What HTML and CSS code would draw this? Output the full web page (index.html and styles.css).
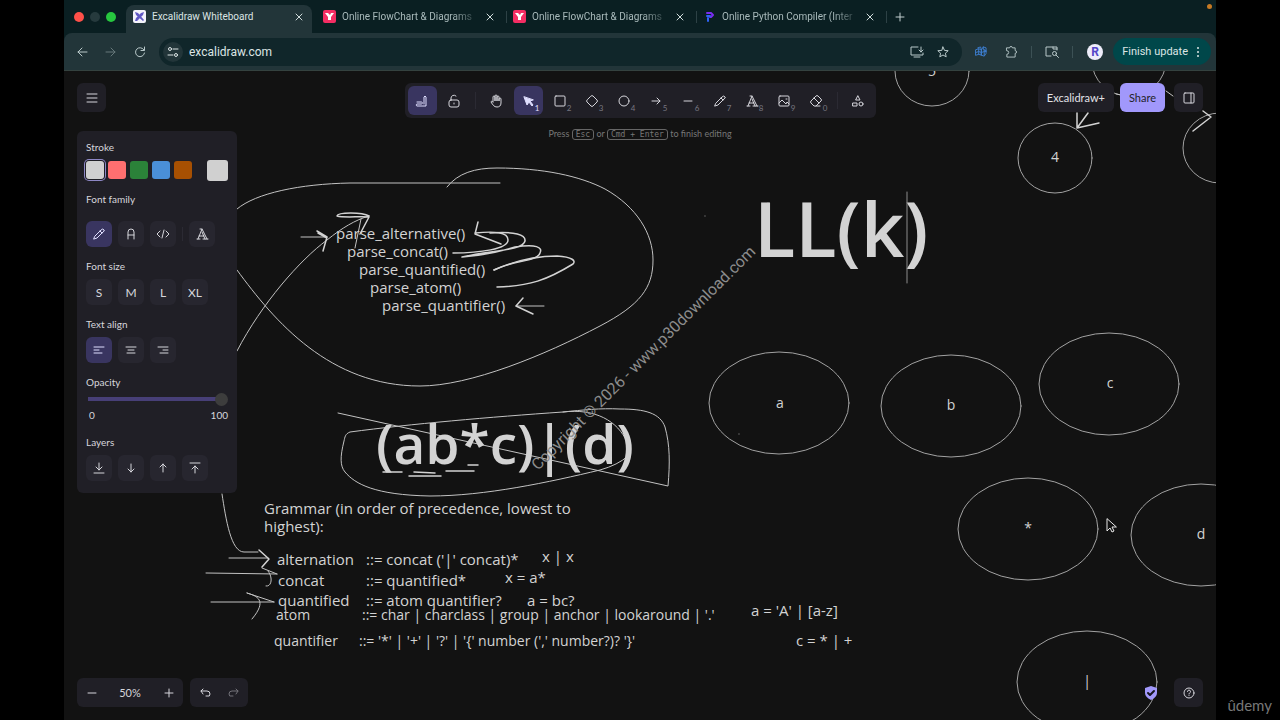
FILE: index.html
```html
<!DOCTYPE html>
<html lang="en">
<head>
    <meta charset="UTF-8">
    <meta name="viewport" content="width=device-width, initial-scale=1.0">
    <title>Excalidraw Whiteboard</title>
    <link rel="stylesheet" href="styles.css">
</head>
<body>
    <div class="browser">
        <!-- Tab strip -->
        <div class="tabs">
            <div class="lights"><i class="light red"></i><i class="light gray"></i><i class="light green"></i></div>
            <div class="tab tab-active">
                <svg class="favicon" viewBox="0 0 13 13"><rect width="13" height="13" rx="2" fill="#f4f3fb"/><path d="M2 2l3 1 6 7-1 1-7-6zM11 2l-1 3-6 6-2 0 1-3 5-5z" fill="#6158c4"/></svg>
                <button class="tab-title">Excalidraw Whiteboard</button>
                <button class="tab-close" aria-label="Close tab"><svg viewBox="0 0 8 8"><path d="M1 1l6 6M7 1L1 7"/></svg></button>
            </div>
            <div class="tab">
                <svg class="favicon" viewBox="0 0 13 13"><rect width="13" height="13" rx="2" fill="#f52d63"/><path d="M2 3h3l2 2 1-2h3L8 7v3H5V7z" fill="#fff"/></svg>
                <button class="tab-title fade">Online FlowChart &amp; Diagrams</button>
                <button class="tab-close" aria-label="Close tab"><svg viewBox="0 0 8 8"><path d="M1 1l6 6M7 1L1 7"/></svg></button>
            </div>
            <div class="tab tab-line">
                <svg class="favicon" viewBox="0 0 13 13"><rect width="13" height="13" rx="2" fill="#f52d63"/><path d="M2 3h3l2 2 1-2h3L8 7v3H5V7z" fill="#fff"/></svg>
                <button class="tab-title fade">Online FlowChart &amp; Diagrams</button>
                <button class="tab-close" aria-label="Close tab"><svg viewBox="0 0 8 8"><path d="M1 1l6 6M7 1L1 7"/></svg></button>
            </div>
            <div class="tab tab-line">
                <svg class="favicon" viewBox="0 0 13 13" fill="none"><path d="M4 3h4l2 2-2 2H7" stroke="#7a2cf0" stroke-width="2"/><path d="M4 6h3M5 8v3" stroke="#2f62f5" stroke-width="2"/></svg>
                <button class="tab-title fade">Online Python Compiler (Inter</button>
                <button class="tab-close" aria-label="Close tab"><svg viewBox="0 0 8 8"><path d="M1 1l6 6M7 1L1 7"/></svg></button>
            </div>
            <button class="new-tab tab-line" aria-label="New tab"><svg viewBox="0 0 10 10"><path d="M5 1v8M1 5h8"/></svg></button>
            <i class="rec-dot"></i>
        </div>

        <!-- Address bar -->
        <div class="address-row">
            <button class="nav" aria-label="Back"><svg viewBox="0 0 12 12"><path d="M11 6H2M6 2L2 6l4 4"/></svg></button>
            <button class="nav dim" aria-label="Forward"><svg viewBox="0 0 12 12"><path d="M1 6h9M6 2l4 4-4 4"/></svg></button>
            <button class="nav" aria-label="Reload"><svg viewBox="0 0 12 12"><path d="M10 4a4.500 4.500 0 1 0 .5 3M10.500 1v3.500H7"/></svg></button>
            <div class="omnibox">
                <button class="site-info" aria-label="Site information"><svg viewBox="0 0 12 12"><circle cx="3" cy="3" r="1.500"/><path d="M6 3h5M1 9h5"/><circle cx="9" cy="9" r="1.500"/></svg></button>
                <input class="url" type="text" value="excalidraw.com" aria-label="Address">
                <button class="nav" aria-label="Install app"><svg viewBox="0 0 14 12"><path d="M8 1H1v8h12V7M4 11h6M11 1v5M9 4l2 2 2-2"/></svg></button>
                <button class="nav" aria-label="Bookmark"><svg viewBox="0 0 12 12"><path d="M6 1l1.500 3.400 3.700.3-2.800 2.500.8 3.600L6 9l-3.200 1.800.8-3.600L.8 4.700l3.700-.3z"/></svg></button>
            </div>
            <div class="extensions">
                <button class="nav blue" aria-label="Extension"><svg viewBox="0 0 13 13"><path d="M1 4l3-1 3 1v6l-3-1-3 1zM4 3v6M7 4l2-3 3 1v6l-2 3-3-1zM9 1v3l3 1M1 7l3-1 3 1 3-1 2 0M3 2l3-1 1 3M10 4v6"/></svg></button>
                <button class="nav" aria-label="Extensions"><svg viewBox="0 0 14 13"><path d="M2 2h3a1.500 1.500 0 0 1 3 0h3v3a1.500 1.500 0 0 1 0 3v4H2V9a1.700 1.700 0 0 0 0-4z"/></svg></button>
                <i class="bar"></i>
                <button class="nav" aria-label="Side panel search"><svg viewBox="0 0 14 12"><path d="M6 10H1V1h11v3M8 1v2h4"/><circle cx="9.500" cy="7.500" r="2"/><path d="M11 9l2.500 2.500"/></svg></button>
                <i class="bar"></i>
                <button class="avatar" aria-label="Profile">R</button>
                <button class="update">Finish update <svg viewBox="0 0 4 12"><circle cx="2" cy="2" r="1"/><circle cx="2" cy="6" r="1"/><circle cx="2" cy="10" r="1"/></svg></button>
            </div>
        </div>

        <main class="app">
            <!-- Whiteboard scene -->
            <svg class="board" viewBox="64 71 1152 649" preserveAspectRatio="xMinYMin slice">
                <g class="node">
                    <ellipse cx="932" cy="71" rx="37" ry="35"/>
                    <ellipse cx="1129" cy="61" rx="37" ry="35"/>
                    <ellipse cx="1055" cy="158" rx="37" ry="35"/>
                    <ellipse cx="1220" cy="148" rx="37" ry="35"/>
                    <ellipse cx="779" cy="403" rx="70" ry="51"/>
                    <ellipse cx="951" cy="406" rx="70" ry="51"/>
                    <ellipse cx="1109" cy="384" rx="70" ry="51"/>
                    <ellipse cx="1028" cy="529" rx="70" ry="51"/>
                    <ellipse cx="1201" cy="535" rx="70" ry="51"/>
                    <ellipse cx="1087" cy="682" rx="70" ry="51"/>
                </g>
                <g class="node-text">
                    <text x="932" y="76">5</text>
                    <text x="1055" y="162">4</text>
                    <text x="780" y="408">a</text>
                    <text x="951" y="410">b</text>
                    <text x="1110" y="388">c</text>
                    <text x="1028" y="533">*</text>
                    <text x="1201" y="539">d</text>
                    <text x="1087" y="686">|</text>
                </g>

                <!-- loops and long lines -->
                <g class="line">
                    <path d="M447 187C458 173 475 168 497 168C543 168 580 176 605 189C637 207 653 234 653 260C653 288 640 305 600 326C545 355 470 386 420 386C330 386 275 322 237 270"/>
                    <path d="M500 183H350C300 184 256 193 237 209"/>
                    <path d="M237 351C262 303 300 260 327 240C342 228 355 220 369 216"/>
                    <path d="M338 413L668 486C670 463 670 445 665 427C660 413 645 409 620 409C600 408 583 410 563 412C490 417 410 424 350 432C345 434 345 437 344 441C340 457 340 466 345 472C355 484 375 495 430 496C485 496 550 482 600 470Q618 465 628 456"/>
                    <path d="M563 412C595 408 618 421 627 442"/>
                    <path d="M222 494C226 520 231 552 244 552H258"/>
                    <path d="M301 237H325M229 558H268M206 573L277 574M211 602H274M516 306H544"/>
                    <path d="M262 568L277 574M268 571C273 577 272 587 266 586M247 593L274 602M247 593C257 596 268 600 252 619"/>
                    <path d="M1166 91L1173 96M1116 94L1121 95M361 219L355 248"/>
                </g>
                <g class="line thick">
                    <path d="M369 216C362 212 338 212 337 216C345 218 360 216 369 217L360 234"/>
                    <path d="M317 231L327 237L323 251M318 233L327 238"/>
                    <path d="M478 222L475 234L501 244M475 233C495 231 508 232 508 240C508 249 480 253 453 253"/>
                    <path d="M490 233C515 231 526 235 525 241C523 251 490 250 462 257Q490 255 515 247C536 244 543 247 540 253C537 262 513 260 494 270"/>
                    <path d="M494 270C512 262 533 256 557 256C573 257 576 261 573 264C547 280 530 286 497 287"/>
                    <path d="M523 298L516 306L533 314"/>
                    <path d="M259 550L269 559L262 567"/>
                    <path d="M1077 113V128L1088 113M1077 128L1099 123M1203 111L1211 117L1193 131"/>
                    <path d="M383 472H402M414 472L435 473M409 476H441M446 471H474M468 465H478"/>
                </g>
                <path class="line" d="M705 216h0M768 203h0M739 434h0"/>

                <g class="note">
                    <text x="336" y="239">parse_alternative()</text>
                    <text x="347" y="257">parse_concat()</text>
                    <text x="359" y="275">parse_quantified()</text>
                    <text x="370" y="293">parse_atom()</text>
                    <text x="382" y="311">parse_quantifier()</text>
                </g>
                <g class="note">
                    <text x="264" y="514">Grammar (in order of precedence, lowest to</text>
                    <text x="264" y="532">highest):</text>
                    <text x="277" y="565">alternation</text>
                    <text x="366" y="565">::= concat ('|' concat)*</text>
                    <text x="542" y="562">x | x</text>
                    <text x="278" y="586">concat</text>
                    <text x="366" y="586">::= quantified*</text>
                    <text x="505" y="583">x = a*</text>
                    <text x="278" y="606">quantified</text>
                    <text x="366" y="606">::= atom quantifier?</text>
                    <text x="527" y="606">a = bc?</text>
                    <text x="751" y="616">a = 'A' | [a-z]</text>
                    <text x="796" y="646">c = * | +</text>
                </g>
                <g class="note note-small">
                    <text x="276" y="620">atom</text>
                    <text x="362" y="620">::= char | charclass | group | anchor | lookaround | '.'</text>
                    <text x="274" y="646">quantifier</text>
                    <text x="359" y="646">::= '*' | '+' | '?' | '{' number (',' number?)? '}'</text>
                </g>
                <text class="formula" x="376" y="464">(ab*c)|(d)</text>
                <text class="title" x="754" y="257">LL(k)</text>
                <path class="caret" d="M907 192V283"/>
                <text class="watermark" transform="translate(538 471) rotate(-45)">Copyright © 2026 - www.p30download.com</text>
                <path class="pointer" d="M1107 519v12l3-3 2 4 2-1-2-4h4z"/>
            </svg>

            <div class="ui">
                <!-- Top bar -->
                <div class="top">
                    <button class="island square" aria-label="Menu"><svg viewBox="0 0 12 12"><path d="M1 2h10M1 6h10M1 10h10"/></svg></button>
                    <div class="island tools">
                        <button class="tool on" aria-label="Pen mode"><svg viewBox="0 0 14 14"><path d="M2 8h4c2 0 2 2 0 2H2c-1 0-1 2 0 2h9V3q-1-2-2 0v7"/></svg></button>
                        <button class="tool" aria-label="Lock"><svg viewBox="0 0 14 14"><rect x="2" y="6" width="10" height="7" rx="2"/><path d="M4 6V4a3 3 0 0 1 5-2M7 9v1"/></svg></button>
                        <i class="split"></i>
                        <button class="tool" aria-label="Hand"><svg viewBox="0 0 14 14"><path d="M4 8V3a1 1 0 0 1 2 0v4V2a1 1 0 0 1 2 0v5V3a1 1 0 0 1 2 0v4V5a1 1 0 0 1 2 0v4c0 3-2 4-4 4-3 0-4-2-6-5 0-1 1-1 2 0"/></svg></button>
                        <button class="tool on" aria-label="Selection"><svg viewBox="0 0 14 14"><path class="solid" d="M3 3l3 8 2-3 3 4 1-1-3-4 3-1z"/></svg><small>1</small></button>
                        <button class="tool" aria-label="Rectangle"><svg viewBox="0 0 14 14"><rect x="2" y="2" width="10" height="10" rx="1"/></svg><small>2</small></button>
                        <button class="tool" aria-label="Diamond"><svg viewBox="0 0 14 14"><path d="M6 2q1-1 2 0l4 4q1 1 0 2l-4 4q-1 1-2 0L2 8q-1-1 0-2z"/></svg><small>3</small></button>
                        <button class="tool" aria-label="Ellipse"><svg viewBox="0 0 14 14"><circle cx="7" cy="7" r="5"/></svg><small>4</small></button>
                        <button class="tool" aria-label="Arrow"><svg viewBox="0 0 14 14"><path d="M3 7h8M8 4l3 3-3 3"/></svg><small>5</small></button>
                        <button class="tool" aria-label="Line"><svg viewBox="0 0 14 14"><path d="M3 7h8"/></svg><small>6</small></button>
                        <button class="tool" aria-label="Draw"><svg viewBox="0 0 14 14"><path d="M3 9l6-6q2-2 3 0 1 1-1 2l-6 6-3 1zM8 4l2 2"/></svg><small>7</small></button>
                        <button class="tool" aria-label="Text"><svg viewBox="0 0 14 14"><path d="M2 12h3M8 12h5M3 12L7 2l5 10M7 2L5 2M7 5l3 7M4 9h5"/></svg><small>8</small></button>
                        <button class="tool" aria-label="Image"><svg viewBox="0 0 14 14"><rect x="2" y="2" width="10" height="10" rx="1"/><path d="M2 9l3-3 4 4 1-2 2 2M9 5h1"/></svg><small>9</small></button>
                        <button class="tool" aria-label="Eraser"><svg viewBox="0 0 14 14"><path d="M11 12H5L2 9q-1-1 0-2l5-5q1-1 2 0l3 3q1 1 0 2l-5 5M5 4l5 5"/></svg><small>0</small></button>
                        <i class="split"></i>
                        <button class="tool" aria-label="More shapes"><svg viewBox="0 0 14 14"><path d="M7 2l2 4H5z"/><rect x="2" y="9" width="4" height="3"/><circle cx="10" cy="10" r="2"/></svg></button>
                    </div>
                    <div class="top-right">
                        <a class="island plus" href="#">Excalidraw+</a>
                        <button class="share">Share</button>
                        <button class="island square" aria-label="Library"><svg viewBox="0 0 12 12"><rect x="1" y="1" width="10" height="10" rx="1"/><path d="M8 1v10"/></svg></button>
                    </div>
                </div>
                <p class="hint">Press <kbd>Esc</kbd> or <kbd>Cmd + Enter</kbd> to finish editing</p>

                <!-- Text properties -->
                <div class="island panel">
                    <section>
                        <h3>Stroke</h3>
                        <div class="swatches">
                            <button class="swatch white picked" aria-label="White"></button>
                            <button class="swatch coral" aria-label="Red"></button>
                            <button class="swatch leaf" aria-label="Green"></button>
                            <button class="swatch sky" aria-label="Blue"></button>
                            <button class="swatch rust" aria-label="Orange"></button>
                            <button class="swatch white current" aria-label="Current color"></button>
                        </div>
                    </section>
                    <section>
                        <h3>Font family</h3>
                        <div class="options spaced">
                            <button class="option on" aria-label="Hand-drawn"><svg viewBox="0 0 14 14"><path d="M3 9l6-6q2-2 3 0 1 1-1 2l-6 6-3 1zM8 4l2 2"/></svg></button>
                            <button class="option" aria-label="Normal"><svg viewBox="0 0 14 14"><path d="M4 12V5q0-3 3-3t3 3v7M4 8h6"/></svg></button>
                            <button class="option" aria-label="Code"><svg viewBox="0 0 14 14"><path d="M4 4L1 7l3 3M10 4l3 3-3 3M8 3l-2 8"/></svg></button>
                            <i class="split"></i>
                            <button class="option" aria-label="More fonts"><svg viewBox="0 0 14 14"><path d="M2 12h3M8 12h5M3 12L7 2l5 10M7 2L5 2M7 5l3 7M4 9h5"/></svg></button>
                        </div>
                    </section>
                    <section>
                        <h3>Font size</h3>
                        <div class="options">
                            <button class="option">S</button>
                            <button class="option">M</button>
                            <button class="option">L</button>
                            <button class="option">XL</button>
                        </div>
                    </section>
                    <section>
                        <h3>Text align</h3>
                        <div class="options">
                            <button class="option on" aria-label="Left"><svg viewBox="0 0 14 14"><path d="M2 4h10M2 7h5M2 10h8"/></svg></button>
                            <button class="option" aria-label="Center"><svg viewBox="0 0 14 14"><path d="M2 4h10M4 7h6M3 10h8"/></svg></button>
                            <button class="option" aria-label="Right"><svg viewBox="0 0 14 14"><path d="M2 4h10M7 7h5M4 10h8"/></svg></button>
                        </div>
                    </section>
                    <section class="opacity">
                        <h3><label for="opacity">Opacity</label></h3>
                        <input type="range" id="opacity" min="0" max="100" value="100">
                        <div class="range-ends"><span>0</span><span>100</span></div>
                    </section>
                    <section>
                        <h3>Layers</h3>
                        <div class="options">
                            <button class="option" aria-label="Send to back"><svg viewBox="0 0 14 14"><path d="M7 2v7M4 6l3 3 3-3M2 12h10"/></svg></button>
                            <button class="option" aria-label="Send backward"><svg viewBox="0 0 14 14"><path d="M7 3v8M4 8l3 3 3-3"/></svg></button>
                            <button class="option" aria-label="Bring forward"><svg viewBox="0 0 14 14"><path d="M7 11V3M4 6l3-3 3 3"/></svg></button>
                            <button class="option" aria-label="Bring to front"><svg viewBox="0 0 14 14"><path d="M7 12V5M4 8l3-3 3 3M2 2h10"/></svg></button>
                        </div>
                    </section>
                </div>

                <!-- Footer -->
                <div class="footer">
                    <div class="island zoom">
                        <button aria-label="Zoom out"><svg viewBox="0 0 12 12"><path d="M2 6h8"/></svg></button>
                        <button class="zoom-value">50%</button>
                        <button aria-label="Zoom in"><svg viewBox="0 0 12 12"><path d="M2 6h8M6 2v8"/></svg></button>
                    </div>
                    <div class="island history">
                        <button aria-label="Undo"><svg viewBox="0 0 12 12"><path d="M4 2L2 4l2 3M2 4h6q3 0 3 3T8 9H7"/></svg></button>
                        <button class="dim" aria-label="Redo"><svg viewBox="0 0 12 12"><path d="M8 2l2 2-2 3M10 4H4Q1 4 1 7t3 2h1"/></svg></button>
                    </div>
                    <svg class="shield" viewBox="0 0 12 14"><path d="M6 0l6 2v5q0 4-6 7-6-3-6-7V2z" fill="#a198fb"/><path d="M3 7l2 2 4-4" fill="none" stroke="#15141f" stroke-width="2"/></svg>
                    <button class="island square" aria-label="Help"><svg viewBox="0 0 24 24" stroke-width="2"><circle cx="12" cy="12" r="10"/><path d="M9 9a3 3 0 1 1 4 3q-1 1-1 2M12 17v.1"/></svg></button>
                </div>
            </div>
        </main>
    </div>
    <div class="brand">ûdemy</div>
</body>
</html>
```
FILE: styles.css
```css
* { box-sizing: border-box; }
body {
    margin: 0;
    background: #000;
    color: #d6d6dc;
    font-family: Lato, sans-serif;
    font-size: 11px;
}
button {
    display: flex;
    align-items: center;
    justify-content: center;
    padding: 0;
    border: 0;
    background: none;
    color: inherit;
    font: inherit;
}
svg {
    fill: none;
    stroke: currentColor;
    stroke-linecap: round;
    stroke-linejoin: round;
}
.browser {
    display: flex;
    flex-direction: column;
    height: 100vh;
    margin: 0 64px;
    background: #0a1f22;
}

/* tab strip */
.tabs {
    display: flex;
    align-items: flex-end;
    height: 33px;
    position: relative;
    font-family: Roboto, sans-serif;
    font-size: 10px;
    color: #a9babb;
}
.lights {
    display: flex;
    gap: 6px;
    width: 62px;
    height: 33px;
    padding-left: 10px;
    align-items: center;
}
.light {
    width: 10px;
    height: 10px;
    border-radius: 50%;
}
.red { background: #fe5049; }
.gray { background: #263a3d; }
.green { background: #27c73f; }
.tab {
    display: flex;
    align-items: center;
    gap: 6px;
    width: 190px;
    height: 28px;
    padding: 0 12px 5px 7px;
}
.tab-active {
    background: #223539;
    color: #dbe4e4;
    border-radius: 8px 8px 0 0;
    width: 186px;
    margin-right: 4px;
    padding-right: 9px;
}
.tab-line {
    background: linear-gradient(#2d4145, #2d4145) 0 6px / 1px 12px no-repeat;
}
.favicon {
    flex: none;
    width: 13px;
    height: 13px;
    stroke: none;
}
.tab-title {
    flex: 1;
    min-width: 0;
    display: block;
    overflow: hidden;
    white-space: nowrap;
    text-align: left;
}
.fade {
    -webkit-mask-image: linear-gradient(90deg, #000 80%, transparent);
    mask-image: linear-gradient(90deg, #000 80%, transparent);
}
.tab-close svg {
    width: 8px;
    height: 8px;
}
.tab-close { color: #d0dcdc; }
.new-tab {
    width: 28px;
    height: 28px;
    padding-bottom: 5px;
    color: #c3d0d0;
}
.new-tab svg { width: 10px; height: 10px; }
.rec-dot {
    position: absolute;
    right: 4px;
    top: 4px;
    width: 5px;
    height: 5px;
    border-radius: 50%;
    background: #c67a24;
}

/* address bar */
.address-row {
    display: flex;
    align-items: center;
    height: 38px;
    padding: 0 5px 0 8px;
    gap: 9px;
    background: #223539;
    border-bottom: 1px solid #34423f;
    border-radius: 8px 8px 0 0;
    font-family: Roboto, sans-serif;
    font-size: 12px;
    color: #dce5e5;
}
.nav {
    width: 20px;
    height: 20px;
    color: #b9c9ca;
}
.nav svg { height: 12px; }
.dim { opacity: 0.45; }
.omnibox {
    display: flex;
    align-items: center;
    flex: 1;
    gap: 6px;
    height: 28px;
    padding: 0 9px 0 4px;
    border-radius: 14px;
    background: #10262a;
}
.site-info {
    width: 20px;
    height: 20px;
    border-radius: 50%;
    background: #223539;
}
.site-info svg { width: 12px; height: 12px; }
.url {
    flex: 1;
    min-width: 0;
    padding: 0;
    border: 0;
    background: none;
    color: inherit;
    font: inherit;
}
.extensions {
    display: flex;
    align-items: center;
    gap: 10px;
}
.blue { color: #3e80d4; }
.bar {
    width: 1px;
    height: 12px;
    background: #3c5155;
}
.avatar {
    width: 16px;
    height: 16px;
    margin-left: 4px;
    border-radius: 50%;
    background: #eeedfa;
    color: #5546c8;
    font-weight: bold;
}
.update {
    gap: 8px;
    height: 27px;
    padding: 0 11px 0 9px;
    border-radius: 14px;
    background: #00474a;
    font-size: 11px;
}
.update svg {
    width: 4px;
    height: 12px;
    fill: currentColor;
    stroke: none;
}

/* whiteboard */
.app {
    position: relative;
    flex: 1;
    min-height: 0;
    overflow: hidden;
    background: #121212;
}
.board {
    display: block;
    width: 100%;
    height: 100%;
}
.board text {
    fill: #d3d3d3;
    stroke: none;
    font-family: "Open Sans", sans-serif;
}
.node { stroke: #a2a2a2; }
.node-text { text-anchor: middle; font-size: 14px; }
.line { stroke: #c2c2c2; }
.thick { stroke-width: 1.5; stroke: #d3d3d3; }
.note { font-size: 15px; }
.note-small { font-size: 14px; }
.formula, .title { font-weight: 600; }
.formula { font-size: 55px; }
.title { font-size: 76px; }
.caret { stroke: #8c8c8c; }
.board .watermark {
    fill: #8c8c8c;
    font-family: Roboto, sans-serif;
    font-size: 16px;
}
.pointer { fill: #111; stroke: #e8e8e8; }

/* editor interface */
.ui {
    position: absolute;
    inset: 12px 13px 13px;
    display: flex;
    flex-direction: column;
}
.island {
    border-radius: 6px;
    background: #201f26;
}
.square {
    width: 29px;
    height: 29px;
}
.square svg { width: 12px; height: 12px; }
.top {
    display: grid;
    grid-template-columns: 1fr auto 1fr;
    align-items: start;
}
.tools {
    display: flex;
    gap: 3px;
    padding: 3px;
}
.tool {
    position: relative;
    width: 29px;
    height: 29px;
    border-radius: 6px;
}
.tool svg, .option svg { width: 14px; height: 14px; }
.tool small {
    position: absolute;
    right: 3px;
    bottom: 2px;
    font-size: 8px;
    line-height: 10px;
    color: #777680;
}
.on { background: #393560; color: #e0dfff; }
.on small { color: #e0dfff; }
.solid { fill: currentColor; }
.split {
    width: 1px;
    margin: 6px 3px;
    background: #2b2a33;
}
.top-right {
    display: flex;
    justify-content: flex-end;
    gap: 6px;
}
.plus, .share {
    height: 29px;
    padding: 0 9px;
    line-height: 29px;
    color: #e3e3e8;
    text-decoration: none;
}
.share {
    margin-right: 3px;
    border-radius: 6px;
    background: #a198fb;
    color: #232329;
}
.hint {
    margin: 7px 0 0;
    line-height: 18px;
    text-align: center;
    color: #777;
    font-size: 9px;
}
kbd {
    padding: 0 3px;
    border: 1px solid #666;
    border-radius: 3px;
    font-family: "DejaVu Sans Mono", monospace;
    font-size: 8px;
}

/* properties panel */
.panel {
    display: flex;
    flex-direction: column;
    gap: 12px;
    width: 160px;
    margin-top: -13px;
    padding: 9px 9px 12px;
    font-size: 10px;
}
.panel h3 {
    margin: 0 0 5px;
    font-size: 10px;
    line-height: 15px;
    font-weight: normal;
}
.swatches {
    display: flex;
    align-items: center;
    gap: 4px;
    height: 20px;
}
.swatch {
    width: 18px;
    height: 18px;
    border-radius: 3px;
}
.white { background: #d0d0d0; }
.coral { background: #ff6f70; }
.leaf { background: #2b8239; }
.sky { background: #4a8fd8; }
.rust { background: #a75002; }
.picked { box-shadow: 0 0 0 1px #201f26, 0 0 0 2px #8d87c5; }
.current {
    width: 21px;
    height: 21px;
    margin-left: auto;
}
.options {
    display: flex;
    gap: 6px;
    height: 26px;
}
.spaced { margin-top: 14px; }
.option {
    width: 26px;
    height: 26px;
    border-radius: 6px;
    background: #27262f;
    font-size: 12px;
}
.option.on { background: #393560; }
.options .split { margin: 6px 0; }
.opacity input {
    display: block;
    appearance: none;
    width: 100%;
    height: 14px;
    margin: 0;
    background: linear-gradient(#473f77, #473f77) 2px 50% / 136px 4px no-repeat;
}
.opacity h3 { margin-bottom: 2px; }
.opacity input::-webkit-slider-thumb {
    appearance: none;
    width: 13px;
    height: 13px;
    border-radius: 50%;
    background: #3d3d3d;
}
.range-ends {
    display: flex;
    justify-content: space-between;
    padding: 0 0 0 3px;
    margin-top: 2px;
    line-height: 15px;
}

/* footer */
.footer {
    display: flex;
    align-items: center;
    gap: 7px;
    margin-top: auto;
}
.zoom, .history {
    display: flex;
    height: 29px;
}
.zoom button, .history button { width: 29px; height: 29px; }
.zoom .zoom-value { width: 48px; font-size: 11px; }
.zoom svg, .history svg { width: 12px; height: 12px; }
.shield {
    width: 12px;
    height: 14px;
    margin-left: auto;
    margin-right: 10px;
    stroke: none;
}
.brand {
    position: absolute;
    right: 8px;
    bottom: 5px;
    color: #777;
    font-size: 15px;
    line-height: 20px;
}
```
